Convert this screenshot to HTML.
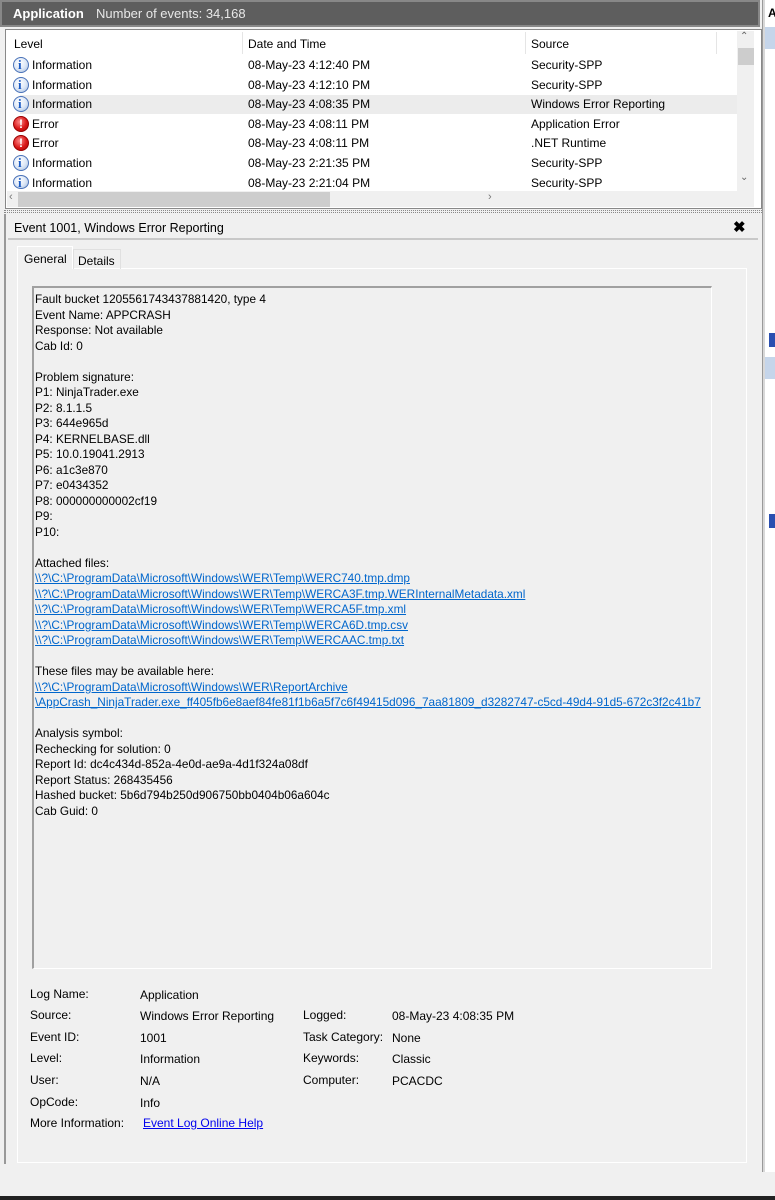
<!DOCTYPE html>
<html><head><meta charset="utf-8"><style>
*{margin:0;padding:0;box-sizing:border-box}
body{width:775px;height:1200px;overflow:hidden;background:#f0f0f0;font-family:"Liberation Sans",sans-serif;font-size:12px;color:#000;position:relative}
.a{position:absolute;white-space:nowrap}
.lnk{color:#0066cc;text-decoration:underline}
.ico{position:absolute;width:16px;height:16px;border-radius:50%}
.info{background:radial-gradient(circle at 40% 35%,#fff 0,#dfe9f7 50%,#9fb8dc 100%);border:1px solid #4a72b8}
.info:after{content:"i";position:absolute;left:4px;top:-1px;font:bold 13px "Liberation Serif",serif;color:#1b5bc4}
.err{background:radial-gradient(circle at 40% 35%,#f88 0,#d81818 55%,#a00 100%);border:1px solid #900}
.err:after{content:"!";position:absolute;left:5px;top:0;font:bold 12px "Liberation Sans",sans-serif;color:#fff}
</style></head><body>
<!-- title bar -->
<div class="a" style="left:0;top:0;width:760px;height:27px;background:#5e5e5e;border:2px solid #888"></div>
<div class="a" style="left:13px;top:6px;color:#fff;font-weight:bold;font-size:13px">Application</div>
<div class="a" style="left:96px;top:6px;color:#e8e8e8;font-size:13px">Number of events: 34,168</div>
<!-- list -->
<div class="a" style="left:5px;top:29px;width:757px;height:180px;border:1px solid #888;background:#fff"></div>
<div class="a" style="left:7px;top:31px;width:730px;height:25px;background:#fff"></div>
<div class="a" style="left:242px;top:32px;width:1px;height:22px;background:#e5e5e5"></div>
<div class="a" style="left:525px;top:32px;width:1px;height:22px;background:#e5e5e5"></div>
<div class="a" style="left:716px;top:32px;width:1px;height:22px;background:#e5e5e5"></div>
<div class="a" style="left:14px;top:37px">Level</div>
<div class="a" style="left:248px;top:37px">Date and Time</div>
<div class="a" style="left:531px;top:37px">Source</div>
<div class="a" style="left:20px;top:95px;width:717px;height:19px;background:#ececec"></div>
<div class="a" style="left:737px;top:31px;width:17px;height:160px;background:#f0f0f0"></div>
<div class="a" style="left:738px;top:48px;width:16px;height:17px;background:#cdcdcd"></div>
<div class="a" style="left:740px;top:31px;font-size:10px;color:#666">&#8963;</div>
<div class="a" style="left:740px;top:172px;font-size:10px;color:#666">&#8964;</div>
<div class="a" style="left:7px;top:191px;width:747px;height:16px;background:#f0f0f0"></div>
<div class="a" style="left:18px;top:192px;width:312px;height:15px;background:#cdcdcd"></div>
<div class="a" style="left:9px;top:191px;font-size:11px;color:#777">&#8249;</div>
<div class="a" style="left:488px;top:191px;font-size:11px;color:#777">&#8250;</div>

<div class="ico info" style="left:13px;top:57px"></div><div class="a" style="left:32px;top:58px">Information</div><div class="a" style="left:248px;top:58px">08-May-23 4:12:40 PM</div><div class="a" style="left:531px;top:58px">Security-SPP</div>
<div class="ico info" style="left:13px;top:77px"></div><div class="a" style="left:32px;top:78px">Information</div><div class="a" style="left:248px;top:78px">08-May-23 4:12:10 PM</div><div class="a" style="left:531px;top:78px">Security-SPP</div>
<div class="ico info" style="left:13px;top:96px"></div><div class="a" style="left:32px;top:97px">Information</div><div class="a" style="left:248px;top:97px">08-May-23 4:08:35 PM</div><div class="a" style="left:531px;top:97px">Windows Error Reporting</div>
<div class="ico err" style="left:13px;top:116px"></div><div class="a" style="left:32px;top:117px">Error</div><div class="a" style="left:248px;top:117px">08-May-23 4:08:11 PM</div><div class="a" style="left:531px;top:117px">Application Error</div>
<div class="ico err" style="left:13px;top:135px"></div><div class="a" style="left:32px;top:136px">Error</div><div class="a" style="left:248px;top:136px">08-May-23 4:08:11 PM</div><div class="a" style="left:531px;top:136px">.NET Runtime</div>
<div class="ico info" style="left:13px;top:155px"></div><div class="a" style="left:32px;top:156px">Information</div><div class="a" style="left:248px;top:156px">08-May-23 2:21:35 PM</div><div class="a" style="left:531px;top:156px">Security-SPP</div>
<div class="ico info" style="left:13px;top:175px;height:14px"></div><div class="a" style="left:32px;top:176px">Information</div><div class="a" style="left:248px;top:176px">08-May-23 2:21:04 PM</div><div class="a" style="left:531px;top:176px">Security-SPP</div>

<!-- splitter -->
<div class="a" style="left:4px;top:210px;width:758px;height:3px;border-top:1px dotted #888;border-bottom:1px dotted #888"></div>
<!-- detail -->
<div class="a" style="left:4px;top:214px;width:758px;height:950px;border-left:2px solid #999"></div>
<div class="a" style="left:14px;top:221px;font-size:12.5px">Event 1001, Windows Error Reporting</div>
<div class="a" style="left:733px;top:218px;font-weight:bold;font-size:15px">&#10006;</div>
<div class="a" style="left:8px;top:238px;width:750px;height:2px;background:#c8c8c8"></div>
<div class="a" style="left:17px;top:268px;width:730px;height:895px;background:#f0f0f0;border:1px solid #fff"></div>
<div class="a" style="left:73px;top:249px;width:48px;height:20px;border:1px solid #e0e0e0;border-bottom:none"></div>
<div class="a" style="left:17px;top:246px;width:56px;height:23px;background:#f0f0f0;border:1px solid #fff;border-bottom:none"></div>
<div class="a" style="left:24px;top:252px">General</div>
<div class="a" style="left:78px;top:254px">Details</div>
<!-- text box -->
<div class="a" style="left:32px;top:286px;width:680px;height:683px;border-top:2px solid #a0a0a0;border-left:2px solid #a0a0a0;border-right:1px solid #fff;border-bottom:1px solid #fff"></div>
<div class="a" style="left:35px;top:292px;line-height:15.5px;font-size:11.8px">
Fault bucket 1205561743437881420, type 4<br>Event Name: APPCRASH<br>Response: Not available<br>Cab Id: 0<br><br>Problem signature:<br>P1: NinjaTrader.exe<br>P2: 8.1.1.5<br>P3: 644e965d<br>P4: KERNELBASE.dll<br>P5: 10.0.19041.2913<br>P6: a1c3e870<br>P7: e0434352<br>P8: 000000000002cf19<br>P9: <br>P10: <br><br>Attached files:<br>
<span class="lnk">\\?\C:\ProgramData\Microsoft\Windows\WER\Temp\WERC740.tmp.dmp</span><br>
<span class="lnk">\\?\C:\ProgramData\Microsoft\Windows\WER\Temp\WERCA3F.tmp.WERInternalMetadata.xml</span><br>
<span class="lnk">\\?\C:\ProgramData\Microsoft\Windows\WER\Temp\WERCA5F.tmp.xml</span><br>
<span class="lnk">\\?\C:\ProgramData\Microsoft\Windows\WER\Temp\WERCA6D.tmp.csv</span><br>
<span class="lnk">\\?\C:\ProgramData\Microsoft\Windows\WER\Temp\WERCAAC.tmp.txt</span><br><br>
These files may be available here:<br>
<span class="lnk">\\?\C:\ProgramData\Microsoft\Windows\WER\ReportArchive</span><br>
<span class="lnk">\AppCrash_NinjaTrader.exe_ff405fb6e8aef84fe81f1b6a5f7c6f49415d096_7aa81809_d3282747-c5cd-49d4-91d5-672c3f2c41b7</span><br><br>
Analysis symbol: <br>Rechecking for solution: 0<br>Report Id: dc4c434d-852a-4e0d-ae9a-4d1f324a08df<br>Report Status: 268435456<br>Hashed bucket: 5b6d794b250d906750bb0404b06a604c<br>Cab Guid: 0
</div>
<!-- fields -->
<div class="a" style="left:30px;top:987px">Log Name:</div><div class="a" style="left:140px;top:988px">Application</div>
<div class="a" style="left:30px;top:1008px">Source:</div><div class="a" style="left:140px;top:1009px">Windows Error Reporting</div>
<div class="a" style="left:303px;top:1008px">Logged:</div><div class="a" style="left:392px;top:1009px">08-May-23 4:08:35 PM</div>
<div class="a" style="left:30px;top:1030px">Event ID:</div><div class="a" style="left:140px;top:1031px">1001</div>
<div class="a" style="left:303px;top:1030px">Task Category:</div><div class="a" style="left:392px;top:1031px">None</div>
<div class="a" style="left:30px;top:1051px">Level:</div><div class="a" style="left:140px;top:1052px">Information</div>
<div class="a" style="left:303px;top:1051px">Keywords:</div><div class="a" style="left:392px;top:1052px">Classic</div>
<div class="a" style="left:30px;top:1073px">User:</div><div class="a" style="left:140px;top:1074px">N/A</div>
<div class="a" style="left:303px;top:1073px">Computer:</div><div class="a" style="left:392px;top:1074px">PCACDC</div>
<div class="a" style="left:30px;top:1095px">OpCode:</div><div class="a" style="left:140px;top:1096px">Info</div>
<div class="a" style="left:30px;top:1116px">More Information:</div><div class="a" style="left:143px;top:1116px;color:#0000ee;text-decoration:underline">Event Log Online Help</div>
<!-- bottom -->
<div class="a" style="left:0;top:1172px;width:775px;height:28px;background:#f0f0f0"></div>
<div class="a" style="left:0;top:1196px;width:775px;height:4px;background:#222"></div>
<!-- right panel strip -->
<div class="a" style="left:762px;top:0;width:3px;height:1172px;background:#d8d8d8;border-left:1px solid #999"></div>
<div class="a" style="left:765px;top:0;width:10px;height:1172px;background:#fff"></div>
<div class="a" style="left:768px;top:6px;font-weight:bold;font-size:12px">A</div>
<div class="a" style="left:765px;top:27px;width:10px;height:22px;background:#c5d5ea"></div>
<div class="a" style="left:765px;top:357px;width:10px;height:22px;background:#c5d5ea"></div>
<div class="a" style="left:769px;top:333px;width:6px;height:14px;background:#2a4fb0"></div>
<div class="a" style="left:769px;top:514px;width:6px;height:14px;background:#2a4fb0"></div>
</body></html>
